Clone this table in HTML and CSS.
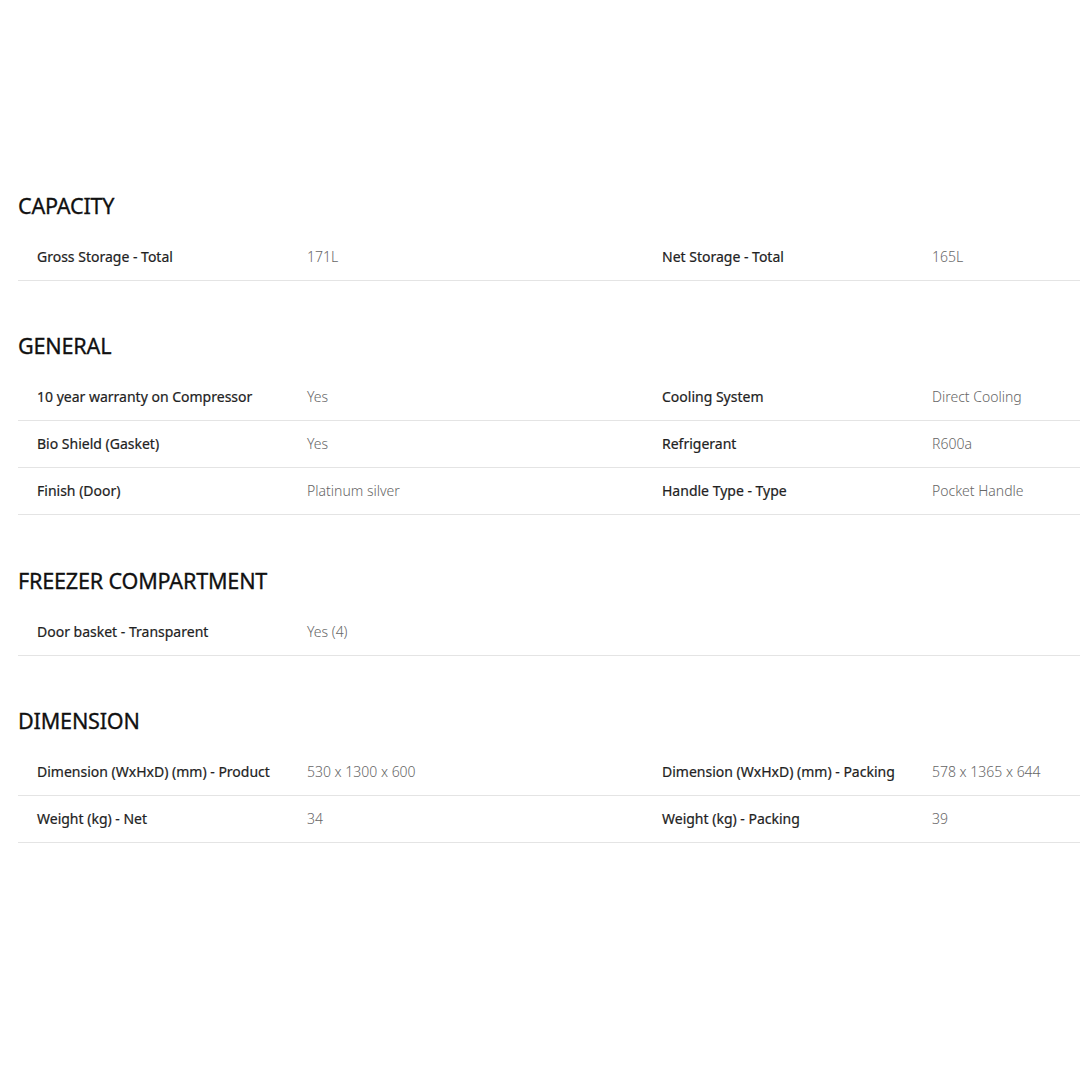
FILE: index.html
```html
<!DOCTYPE html>
<html lang="en">
<head>
<meta charset="utf-8">
<title>Specs</title>
<link rel="stylesheet" href="styles.css">
</head>
<body>
<main class="specs">
  <section class="spec-section">
    <h2 class="spec-title">CAPACITY</h2>
    <div class="spec-row">
      <div class="spec-item"><span class="spec-label">Gross Storage - Total</span><span class="spec-value">171L</span></div>
      <div class="spec-item"><span class="spec-label">Net Storage - Total</span><span class="spec-value">165L</span></div>
    </div>
  </section>
  <section class="spec-section">
    <h2 class="spec-title">GENERAL</h2>
    <div class="spec-row">
      <div class="spec-item"><span class="spec-label">10 year warranty on Compressor</span><span class="spec-value">Yes</span></div>
      <div class="spec-item"><span class="spec-label">Cooling System</span><span class="spec-value">Direct Cooling</span></div>
    </div>
    <div class="spec-row">
      <div class="spec-item"><span class="spec-label">Bio Shield (Gasket)</span><span class="spec-value">Yes</span></div>
      <div class="spec-item"><span class="spec-label">Refrigerant</span><span class="spec-value">R600a</span></div>
    </div>
    <div class="spec-row">
      <div class="spec-item"><span class="spec-label">Finish (Door)</span><span class="spec-value">Platinum silver</span></div>
      <div class="spec-item"><span class="spec-label">Handle Type - Type</span><span class="spec-value">Pocket Handle</span></div>
    </div>
  </section>
  <section class="spec-section">
    <h2 class="spec-title">FREEZER COMPARTMENT</h2>
    <div class="spec-row">
      <div class="spec-item"><span class="spec-label">Door basket - Transparent</span><span class="spec-value">Yes (4)</span></div>
    </div>
  </section>
  <section class="spec-section">
    <h2 class="spec-title">DIMENSION</h2>
    <div class="spec-row">
      <div class="spec-item"><span class="spec-label">Dimension (WxHxD) (mm) - Product</span><span class="spec-value">530 x 1300 x 600</span></div>
      <div class="spec-item"><span class="spec-label">Dimension (WxHxD) (mm) - Packing</span><span class="spec-value">578 x 1365 x 644</span></div>
    </div>
    <div class="spec-row">
      <div class="spec-item"><span class="spec-label">Weight (kg) - Net</span><span class="spec-value">34</span></div>
      <div class="spec-item"><span class="spec-label">Weight (kg) - Packing</span><span class="spec-value">39</span></div>
    </div>
  </section>
</main>
</body>
</html>
```

FILE: styles.css
```css
html, body {
  margin: 0;
  padding: 0;
  background: #fff;
}
body {
  font-family: "Noto Sans", "Open Sans", Arial, sans-serif;
  color: #222;
}
.specs {
  padding: 191px 0 0 18px;
  display: flex;
  flex-direction: column;
  gap: 50px;
}
.spec-section:nth-child(3) {
  margin-top: 1px;
}
.spec-title {
  margin: 0 0 13px 0;
  font-size: 21.6px;
  line-height: 30px;
  font-weight: 400;
  color: #111;
  letter-spacing: -0.2px;
  -webkit-text-stroke: 0.3px #111;
}
.spec-row {
  display: flex;
  border-bottom: 1px solid #e4e4e4;
}
.spec-item {
  width: 625px;
  flex: none;
  display: flex;
  padding: 13px 0 13px 19px;
  box-sizing: border-box;
  font-size: 14px;
  line-height: 20px;
  white-space: nowrap;
}
.spec-item + .spec-item {
  flex: 1 1 auto;
  width: auto;
  min-width: 0;
  overflow: hidden;
}
.spec-label {
  width: 270px;
  flex: none;
  color: #222;
  font-weight: 400;
  -webkit-text-stroke: 0.2px #222;
}
.spec-value {
  color: #666;
  font-weight: 300;
}
```
